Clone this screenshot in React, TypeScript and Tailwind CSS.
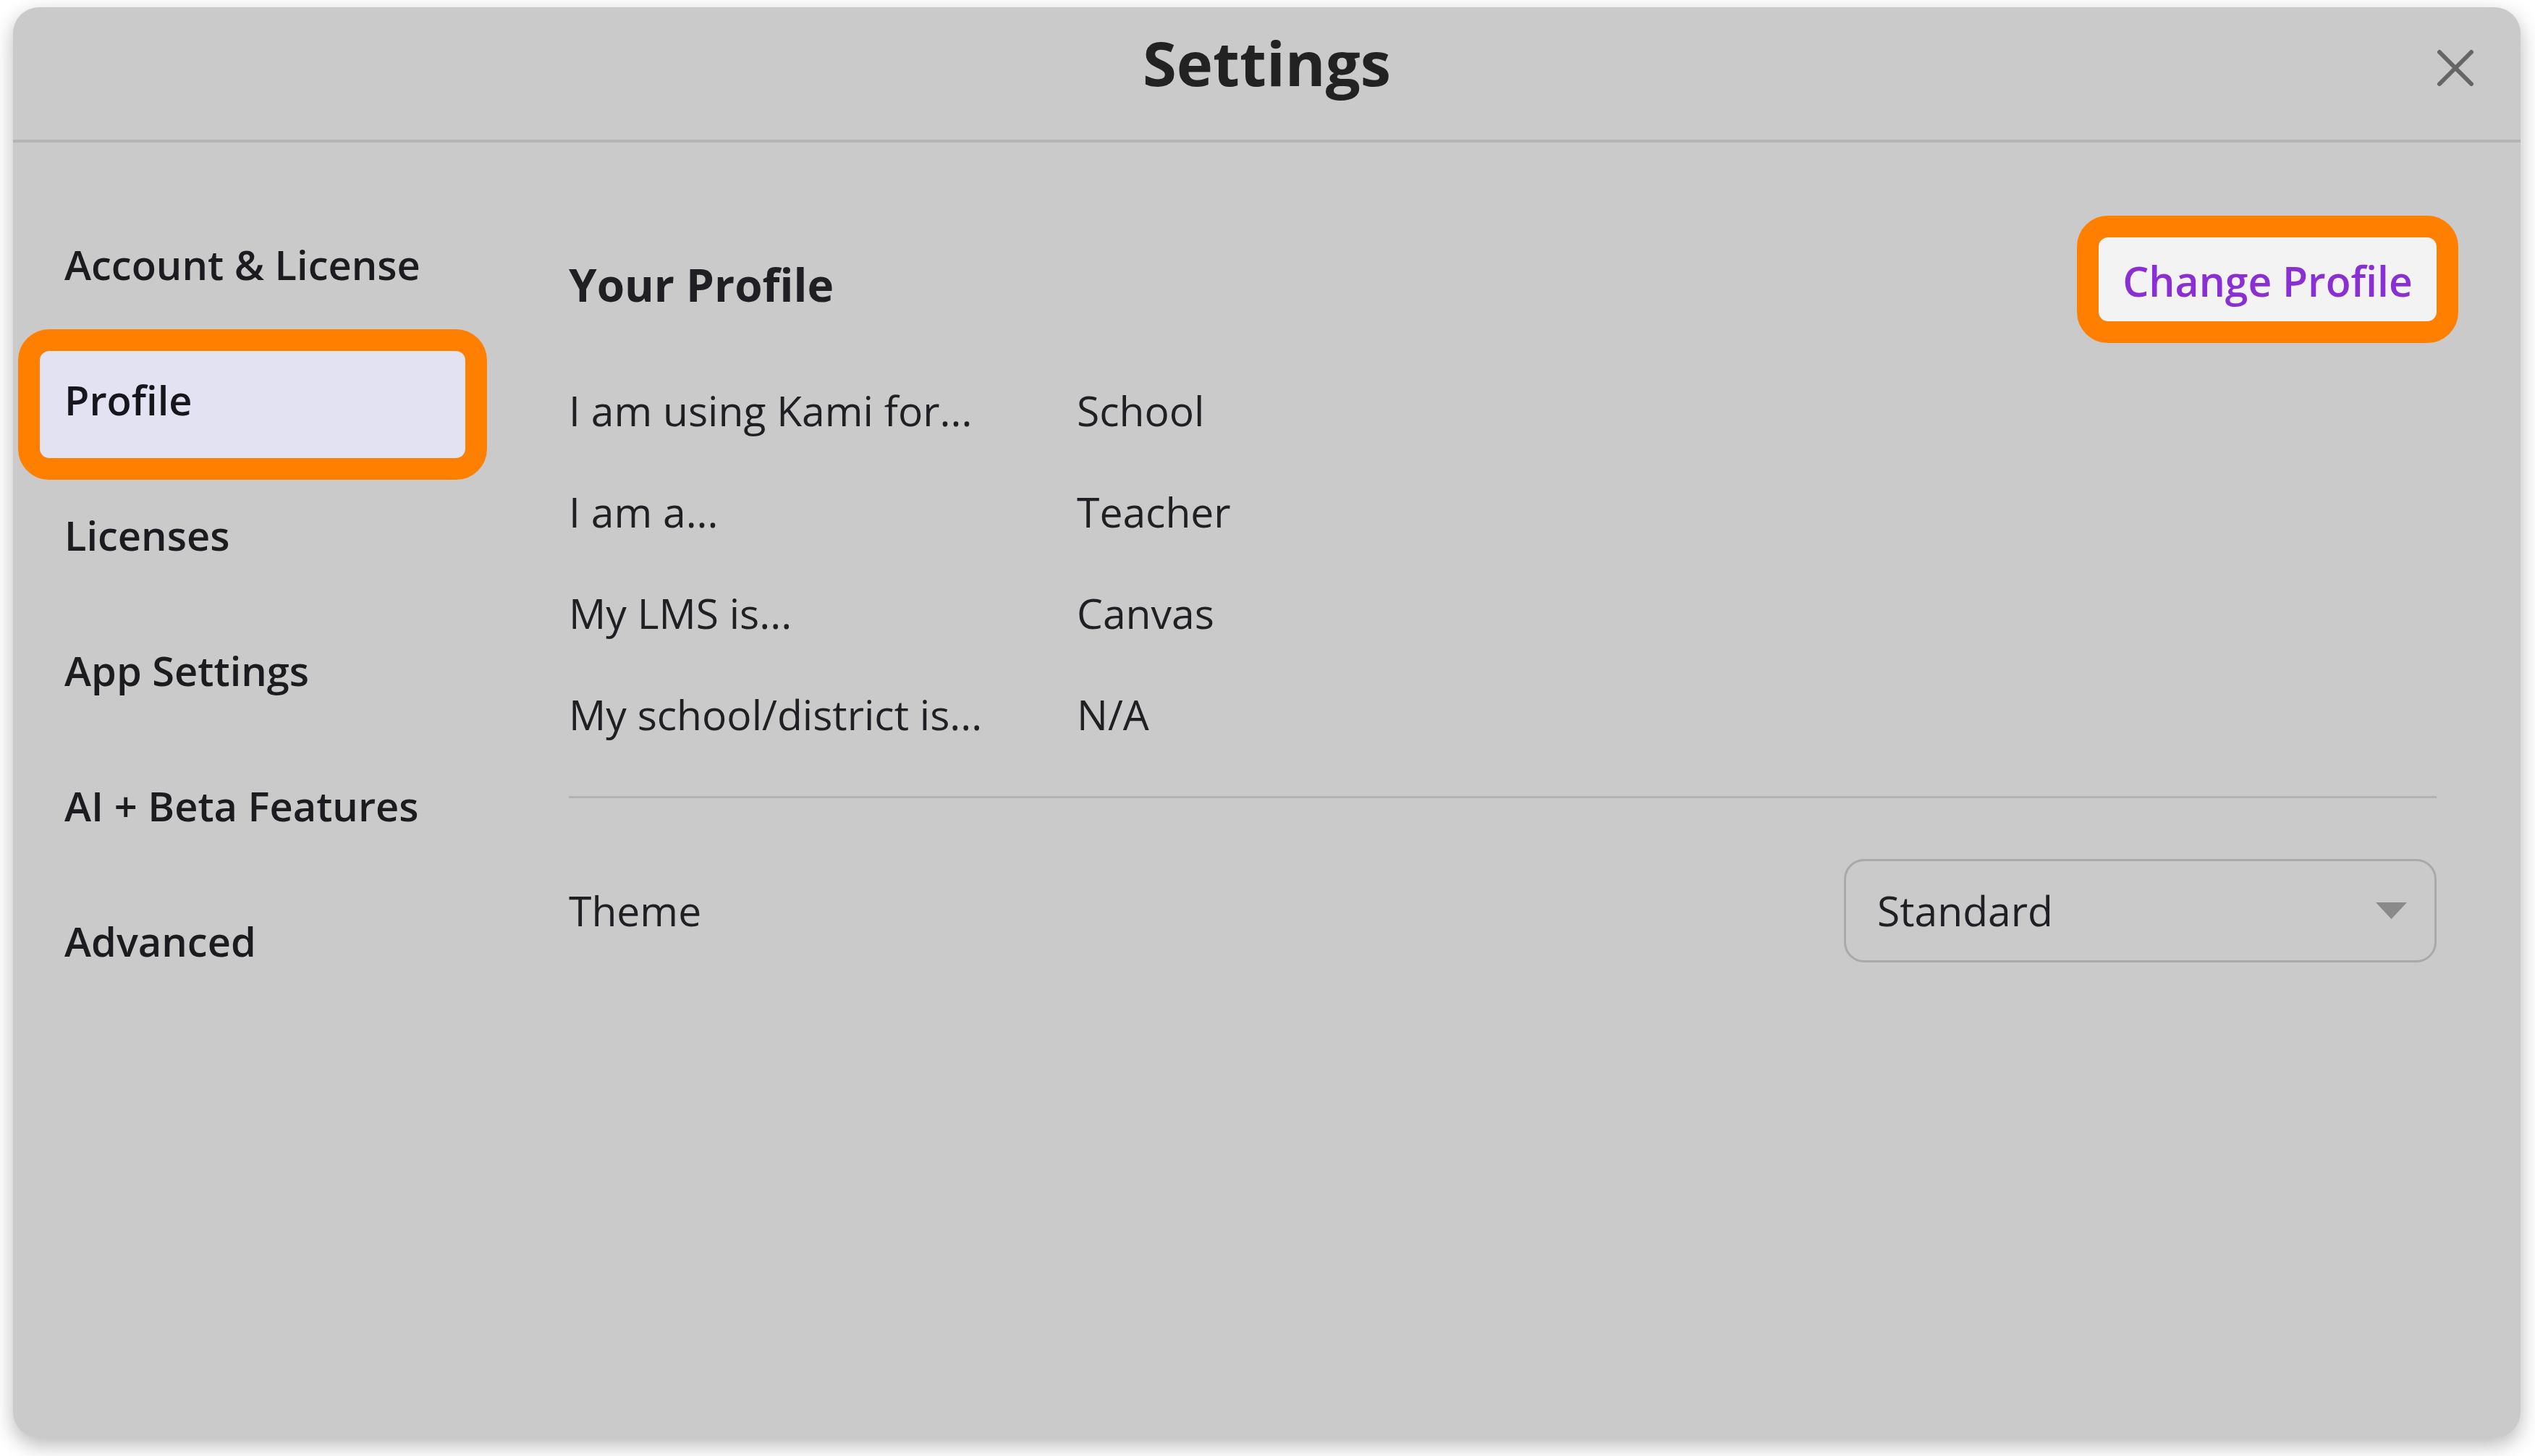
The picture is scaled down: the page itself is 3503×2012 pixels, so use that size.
import React from 'react';

// Sidebar entries of the settings dialog
const navItems = ['Account & License', 'Profile', 'Licenses', 'App Settings', 'AI + Beta Features', 'Advanced'];

// Profile answers shown in the main panel
const profileRows: { label: string; value: string }[] = [
    { label: 'I am using Kami for...', value: 'School' },
    { label: 'I am a...', value: 'Teacher' },
    { label: 'My LMS is...', value: 'Canvas' },
    { label: 'My school/district is...', value: 'N/A' },
];

function CloseIcon() {
    return (
        <svg width="56" height="56" viewBox="0 0 56 56" fill="none">
            <path d="M6 6L50 50M50 6L6 50" stroke="#666666" strokeWidth="6" strokeLinecap="round" />
        </svg>
    );
}

function CaretDown() {
    return (
        <svg width="43" height="23" viewBox="0 0 43 23">
            <path d="M0 0H43L21.5 23Z" fill="#8a8a8a" />
        </svg>
    );
}

export default function App() {
    return (
        <div className="w-[3503px] h-[2012px] bg-white pl-[18px] pt-[10px] font-['Open_Sans',sans-serif] text-[#1f1f24]">
            <div className="w-[3465px] h-[1977px] rounded-[36px] bg-[#cacaca] shadow-[0_10px_28px_rgba(0,0,0,0.28)] flex flex-col overflow-hidden">
                {/* Header */}
                <div className="h-[187px] shrink-0 border-b-[4px] border-[#b4b4b4] grid grid-cols-[1fr_auto_1fr] items-center pb-[30px]">
                    <div />
                    <h1 className="text-[85px] font-bold text-[#222222] leading-none">Settings</h1>
                    <button className="justify-self-end mr-[62px] mt-[14px] flex items-center justify-center">
                        <CloseIcon />
                    </button>
                </div>

                {/* Body */}
                <div className="flex flex-1">
                    <nav className="w-[768px] shrink-0 pl-[37px] pr-[143px] pt-[101px] flex flex-col gap-[39px]">
                        {navItems.map((item) => (
                            <div
                                key={item}
                                className={
                                    item === 'Profile'
                                        ? 'h-[148px] flex items-center px-[34px] pb-[14px] rounded-[13px] bg-[#e3e2f3] text-[56px] font-semibold text-[#16161c] outline-solid outline-[30px] outline-[#ff8000]'
                                        : 'h-[148px] flex items-center px-[34px] pb-[14px] rounded-[13px] text-[56px] font-semibold text-[#1c1c20]'
                                }>
                                {item}
                            </div>
                        ))}
                    </nav>

                    <main className="flex-1 pt-[131px] pr-[116px]">
                        <div className="h-[116px] flex items-center justify-between">
                            <h2 className="text-[62px] font-bold leading-none pt-[14px]">Your Profile</h2>
                            <button className="h-[116px] w-[467px] pt-[6px] rounded-[13px] bg-[#f3f3f3] text-[57px] font-semibold text-[#8a2fd4] outline-solid outline-[30px] outline-[#ff8000]">
                                Change Profile
                            </button>
                        </div>

                        <div className="mt-[54px] flex flex-col">
                            {profileRows.map((row) => (
                                <div key={row.label} className="h-[140px] flex items-center text-[57px]">
                                    <span className="w-[702px] shrink-0">{row.label}</span>
                                    <span>{row.value}</span>
                                </div>
                            ))}
                        </div>

                        <div className="mt-[42px] h-[3px] bg-[#b2b2b2]" />

                        <div className="mt-[84px] flex items-center justify-between">
                            <span className="text-[57px]">Theme</span>
                            <div className="w-[819px] h-[143px] rounded-[28px] border-[3px] border-[#a9a9a9] pl-[43px] pr-[38px] flex items-center justify-between">
                                <span className="text-[57px]">Standard</span>
                                <CaretDown />
                            </div>
                        </div>
                    </main>
                </div>
            </div>
        </div>
    );
}
